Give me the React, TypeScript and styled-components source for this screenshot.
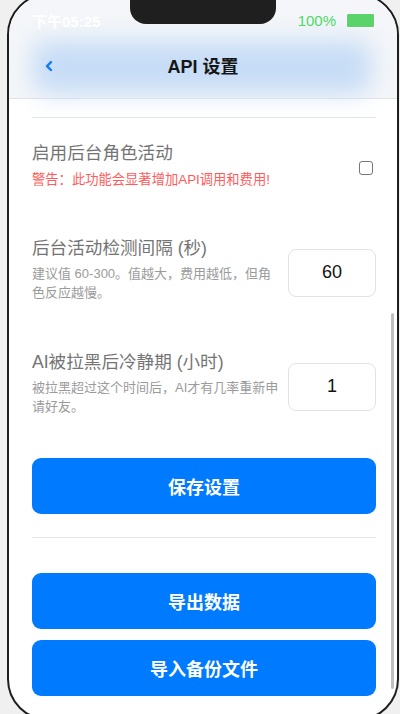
import React, { FC } from 'react'
import styled, { createGlobalStyle } from 'styled-components'

const GlobalStyle = createGlobalStyle`
html, body {
  margin: 0;
  padding: 0;
  background: #f0f0f0;
  font-family: "Liberation Sans", "Noto Sans CJK SC", sans-serif;
  overflow: hidden;
}
`

const Phone = styled.div`
position: relative;
box-sizing: border-box;
width: 392px;
height: 728px;
margin: -7px 0 0 7px;
border: 2px solid #1e1e1e;
border-radius: 42px;
background: #fff;
overflow: hidden;
display: flex;
flex-direction: column;
`

const Notch = styled.div`
position: absolute;
top: 0;
left: 50%;
transform: translateX(-50%);
width: 146px;
height: 29px;
background: #1f1f1f;
border-radius: 0 0 16px 16px;
z-index: 3;
`

const TopBar = styled.header`
position: relative;
isolation: isolate;
background: #f4f6f9;
border-bottom: 1px solid #e3e3e3;
`

const StatusBar = styled.div`
display: flex;
align-items: center;
justify-content: space-between;
height: 38px;
padding: 6px 22px 0 23px;
`

const Time = styled.span`
color: #fff;
font-size: 15px;
font-weight: 700;
`

const Battery = styled.div`
display: flex;
align-items: center;
gap: 10px;
color: #4cd964;
font-size: 15px;
`

const BatteryCell = styled.span`
display: block;
width: 27px;
height: 13px;
background: #5ad46a;
border: 1px solid #fff;
border-radius: 2px;
`

const NavBar = styled.div`
position: relative;
display: flex;
align-items: center;
justify-content: center;
height: 52px;
margin-bottom: 7px;

&::before {
  content: '';
  position: absolute;
  inset: 2px 26px -2px 24px;
  background: #c6dcf6;
  border-radius: 14px;
  filter: blur(12px);
  z-index: -1;
}
`

const BackButton = styled.span`
position: absolute;
left: 36px;
top: 50%;
transform: translateY(-40%);
display: flex;
`

const Title = styled.h1`
margin: 0;
font-size: 18px;
font-weight: 600;
color: #161616;
`

const Content = styled.main`
display: flex;
flex-direction: column;
padding: 0 21px 0 23px;
`

const Divider = styled.div<{ $top: number }>`
height: 1px;
background: #e4e4e4;
margin-top: ${p => p.$top}px;
`

const SettingRow = styled.div<{ $top: number }>`
display: flex;
align-items: center;
gap: 8px;
margin-top: ${p => p.$top}px;
`

const SettingText = styled.div`
flex: 1;
min-width: 0;
`

const Label = styled.div`
font-size: 17.6px;
line-height: 24px;
font-weight: 400;
color: #747474;
`

const Warning = styled.div`
margin-top: 5px;
font-size: 13.3px;
line-height: 19px;
color: #ff5b5b;
`

const Hint = styled.div`
margin-top: 4px;
font-size: 13px;
line-height: 19px;
color: #9b9b9b;
`

const CheckBox = styled.span`
box-sizing: border-box;
width: 14px;
height: 14px;
margin: 6px 3px 0 0;
border: 1px solid #767676;
border-radius: 3px;
background: #fff;
`

const NumberInput = styled.input`
box-sizing: border-box;
width: 88px;
height: 48px;
margin-top: 7px;
border: 1px solid #e2e2e2;
border-radius: 8px;
text-align: center;
font-family: "Liberation Sans", sans-serif;
font-size: 18px;
color: #111;
background: #fff;
outline: none;
`

const PrimaryButton = styled.button<{ $top: number }>`
height: 56px;
margin-top: ${p => p.$top}px;
border: none;
border-radius: 9px;
background: #007aff;
color: #fff;
font-family: "Liberation Sans", "Noto Sans CJK SC", sans-serif;
font-size: 18px;
font-weight: 700;
`

const ScrollThumb = styled.div`
position: absolute;
top: 318px;
right: 3px;
width: 3px;
height: 376px;
background: #bfbfbf;
border-radius: 2px;
`

const App: FC = () => {
  return (
    <>
      <GlobalStyle />
      <Phone>
        <Notch />
        <TopBar>
          <StatusBar>
            <Time>下午05:25</Time>
            <Battery>
              100%
              <BatteryCell />
            </Battery>
          </StatusBar>
          <NavBar>
            <BackButton>
              <svg width="8" height="11" viewBox="0 0 8 11">
                <polyline points="6,1.5 2,5.5 6,9.5" fill="none" stroke="#1a7cf2" strokeWidth="2.4" strokeLinecap="round" strokeLinejoin="round" />
              </svg>
            </BackButton>
            <Title>API 设置</Title>
          </NavBar>
        </TopBar>

        <Content>
          <Divider $top={18} />

          <SettingRow $top={23}>
            <SettingText>
              <Label>启用后台角色活动</Label>
              <Warning>警告：此功能会显著增加API调用和费用!</Warning>
            </SettingText>
            <CheckBox />
          </SettingRow>

          <SettingRow $top={47}>
            <SettingText>
              <Label>后台活动检测间隔 (秒)</Label>
              <Hint>建议值 60-300。值越大，费用越低，但角色反应越慢。</Hint>
            </SettingText>
            <NumberInput type="text" defaultValue="60" />
          </SettingRow>

          <SettingRow $top={48}>
            <SettingText>
              <Label>AI被拉黑后冷静期 (小时)</Label>
              <Hint>被拉黑超过这个时间后，AI才有几率重新申请好友。</Hint>
            </SettingText>
            <NumberInput type="text" defaultValue="1" />
          </SettingRow>

          <PrimaryButton $top={42}>保存设置</PrimaryButton>

          <Divider $top={23} />

          <PrimaryButton $top={35}>导出数据</PrimaryButton>
          <PrimaryButton $top={11}>导入备份文件</PrimaryButton>
        </Content>

        <ScrollThumb />
      </Phone>
    </>
  )
}

export default App
